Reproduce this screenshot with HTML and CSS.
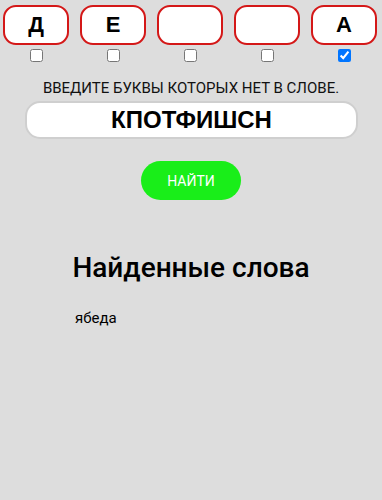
FILE: index.html
```html
<!DOCTYPE html>
<html lang="ru">
<head>
<meta charset="utf-8">
<link rel="stylesheet" href="styles.css">
</head>
<body>
<div class="letters">
  <div class="slot"><div class="box">Д</div><input type="checkbox" class="chk"></div>
  <div class="slot"><div class="box">Е</div><input type="checkbox" class="chk"></div>
  <div class="slot"><div class="box"></div><input type="checkbox" class="chk"></div>
  <div class="slot"><div class="box"></div><input type="checkbox" class="chk"></div>
  <div class="slot"><div class="box">А</div><input type="checkbox" class="chk" checked></div>
</div>
<p class="label">ВВЕДИТЕ БУКВЫ КОТОРЫХ НЕТ В СЛОВЕ.</p>
<div class="exclude">КПОТФИШСН</div>
<div class="actions"><button class="find">НАЙТИ</button></div>
<h1 class="title">Найденные слова</h1>
<ul class="results">
  <li>ябеда</li>
</ul>
</body>
</html>
```
FILE: styles.css
```css
html, body {
  margin: 0;
  padding: 0;
  background: #dddddd;
  font-family: Roboto, "Noto Sans", sans-serif;
  color: #111;
}
body {
  width: 382px;
  height: 500px;
}
.letters {
  display: flex;
  gap: 11px;
  padding: 5px 0 0 3px;
}
.slot {
  display: flex;
  flex-direction: column;
  align-items: center;
  width: 66px;
}
.box {
  box-sizing: border-box;
  width: 66px;
  height: 40px;
  border: 2px solid #d41818;
  border-radius: 13px;
  background: #fff;
  font-family: "Liberation Sans", Arial, sans-serif;
  font-weight: bold;
  font-size: 22px;
  line-height: 36px;
  text-align: center;
  color: #000;
}
.chk {
  width: 13px;
  height: 13px;
  margin: 4px 0 0 0;
}
.label {
  margin: 17px 0 0 0;
  text-align: center;
  font-size: 15px;
  line-height: 18px;
  color: #111;
}
.exclude {
  box-sizing: border-box;
  margin: 4px 0 0 25px;
  width: 333px;
  height: 38px;
  border: 2px solid #cfcfcf;
  border-radius: 15px;
  background: #fff;
  font-family: "Liberation Sans", Arial, sans-serif;
  font-weight: bold;
  font-size: 24px;
  line-height: 34px;
  text-align: center;
  color: #000;
}
.actions {
  display: flex;
  justify-content: center;
  padding: 22px 0 0 0;
}
.find {
  width: 100px;
  height: 39px;
  border: none;
  border-radius: 20px;
  background: #19ee19;
  color: #fff;
  font-family: Roboto, sans-serif;
  font-size: 14px;
  padding: 0;
  margin-left: 0;
}
.title {
  margin: 53px 0 0 0;
  text-align: center;
  font-weight: 500;
  font-size: 28px;
  line-height: 30px;
  color: #000;
}
.results {
  list-style: none;
  margin: 26px 0 0 0;
  padding: 0 0 0 75px;
  font-size: 15px;
  line-height: 18px;
  color: #000;
}
```
